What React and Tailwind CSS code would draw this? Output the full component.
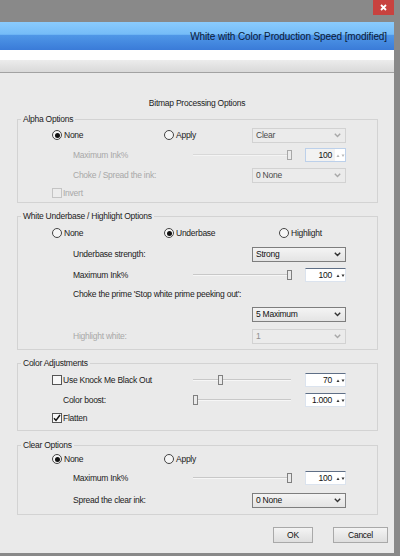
import React from 'react'

const txt = 'text-[8.5px] tracking-[-0.25px] leading-[11px]'

function Radio({ checked, label, disabled }) {
  return (
    <div className="flex items-center gap-[2px]">
      <span className={`w-[10px] h-[10px] rounded-full border flex items-center justify-center bg-[#f6f6f6] ${disabled ? 'border-[#b0b0b0]' : 'border-[#444]'}`}>
        {checked && <span className="w-[5px] h-[5px] rounded-full bg-[#111]" />}
      </span>
      <span className={disabled ? 'text-[#a8a8a8]' : 'text-[#1b1b1b]'}>{label}</span>
    </div>
  )
}

function Checkbox({ checked, label, disabled }) {
  return (
    <div className="flex items-center gap-[1px]">
      <span className={`w-[10px] h-[10px] border flex items-center justify-center ${disabled ? 'border-[#c4c4c4] bg-[#ececec]' : 'border-[#555] bg-[#f8f8f8]'}`}>
        {checked && (
          <svg width="8" height="8" viewBox="0 0 8 8">
            <path d="M1 4.2 L3 6.4 L7 1" fill="none" stroke="#111" strokeWidth="1.5" />
          </svg>
        )}
      </span>
      <span className={disabled ? 'text-[#a8a8a8]' : 'text-[#1b1b1b]'}>{label}</span>
    </div>
  )
}

function Select({ value, disabled, dim }) {
  return (
    <div
      className={`w-[94px] h-[15px] border flex items-center justify-between pl-[3px] pr-[4px] ${
        disabled
          ? 'border-[#d2d2d2] bg-[#ebebeb]'
          : 'border-[#7e7e7e] bg-[linear-gradient(to_bottom,#f4f4f4,#e4e4e4)]'
      }`}
    >
      <span className={dim ? 'text-[#8e8e8e]' : disabled ? 'text-[#4a4a4a]' : 'text-[#111]'}>{value}</span>
      <svg width="7" height="5" viewBox="0 0 7 5">
        <path d="M0.8 0.8 L3.5 3.6 L6.2 0.8" fill="none" stroke={disabled ? '#a8a8a8' : '#333'} strokeWidth="1.4" />
      </svg>
    </div>
  )
}

function Spin({ value, disabled }) {
  return (
    <div
      className={`w-[41px] h-[14px] border flex items-center ${
        disabled
          ? 'border-[#bcd0ea] bg-[#f2f2f2]'
          : 'border-[#dbe3ee] border-t-[#5f6f86] bg-white'
      }`}
    >
      <span className="flex-1 text-right pr-[3px] text-[#111]">{value}</span>
      <span className="w-[10px] h-full bg-white flex items-center justify-center">
        <svg width="9" height="5" viewBox="0 0 9 5">
          <path d="M0.5 4 L2 1.5 L3.5 4 Z" fill={disabled ? '#b8b8b8' : '#333'} />
          <path d="M5.5 1.5 L7 4 L8.5 1.5 Z" fill={disabled ? '#b8b8b8' : '#333'} />
        </svg>
      </span>
    </div>
  )
}

function Slider({ thumb, disabled }) {
  return (
    <div className="relative w-[98px] h-[12px]">
      <div className={`absolute left-0 right-0 top-[5px] h-[2px] border-t ${disabled ? 'border-[#d8d8d8] bg-[#f4f4f4]' : 'border-[#c8c8c8] bg-[#f6f6f6]'}`} />
      <div
        className={`absolute top-[1px] w-[5px] h-[10px] border ${disabled ? 'border-[#a8a8a8] bg-[#ececec]' : 'border-[#808080] bg-[#eaeaea]'}`}
        style={{ left: thumb }}
      />
    </div>
  )
}

function Group({ title, className, children }) {
  return (
    <div className={`ml-[17px] w-[361px] border border-[#d3d3d3] ${className}`}>
      <div className="-mt-[6px] ml-[3px] px-[2px] w-fit bg-[#eaeaea] h-[11px] text-[#1b1b1b]">{title}</div>
      {children}
    </div>
  )
}

function SliderRow({ label, thumb, value, disabled, h }) {
  return (
    <div className={`flex items-center pl-[55px] ${h}`}>
      <span className={`w-[120px] ${disabled ? 'text-[#a8a8a8]' : 'text-[#1b1b1b]'}`}>{label}</span>
      <Slider thumb={thumb} disabled={disabled} />
      <div className="ml-[14px]">
        <Spin value={value} disabled={disabled} />
      </div>
    </div>
  )
}

function SelectRow({ label, value, disabled, dim, h }) {
  return (
    <div className={`flex items-center pl-[55px] ${h}`}>
      <span className={`w-[179px] ${disabled || dim ? 'text-[#a8a8a8]' : 'text-[#1b1b1b]'}`}>{label}</span>
      <Select value={value} disabled={disabled || dim} dim={dim} />
    </div>
  )
}

export default function App() {
  return (
    <div className="w-[400px] h-[556px] bg-[#898989] flex flex-col font-['Liberation_Sans',Arial,sans-serif] overflow-hidden">
      {/* window chrome */}
      <div className="h-[22px] flex justify-end pr-[6px]">
        <div className="w-[21px] h-[15px] bg-[#c8423f] flex items-center justify-center">
          <svg width="7" height="7" viewBox="0 0 7 7">
            <path d="M1 1 L6 6 M6 1 L1 6" stroke="#fff" strokeWidth="1.8" />
          </svg>
        </div>
      </div>
      <div className="flex-1 flex">
        <div className="w-[394px] flex flex-col">
          <div className="h-[28px] bg-[linear-gradient(to_bottom,#8acbfd_0%,#75bcf8_44%,#4f97e7_47%,#3a7bd8_100%)] flex items-center justify-end pr-[7px]">
            <span className="text-[10px] text-[#0b1a35] tracking-[-0.1px]">White with Color Production Speed [modified]</span>
          </div>
          <div className="h-[10px] bg-white" />
          <div className="h-[13px] bg-[linear-gradient(to_bottom,#ececec,#d9d9d9)] border-b border-[#a2a2a2]" />

          {/* dialog body */}
          <div className={`flex-1 bg-[#eaeaea] flex flex-col ${txt}`}>
            <div className="pt-[24px] h-[36px] text-center text-[#1b1b1b] leading-[12px]">Bitmap Processing Options</div>

            <Group title="Alpha Options" className="mt-[10px] pb-[1px]">
              <div className="flex items-center h-[20px] pl-[34px]">
                <div className="w-[112px]"><Radio checked label="None" /></div>
                <div className="w-[88px]"><Radio label="Apply" /></div>
                <Select value="Clear" disabled />
              </div>
              <SliderRow label="Maximum Ink%" thumb={94} value="100" disabled h="h-[20px]" />
              <SelectRow label="Choke / Spread the ink:" value="0 None" disabled h="h-[20px]" />
              <div className="flex items-center h-[16px] pl-[34px]">
                <Checkbox label="Invert" disabled />
              </div>
            </Group>

            <Group title="White Underbase / Highlight Options" className="mt-[13px] pb-[3px]">
              <div className="flex items-center h-[22px] pl-[34px]">
                <div className="w-[112px]"><Radio label="None" /></div>
                <div className="w-[115px]"><Radio checked label="Underbase" /></div>
                <Radio label="Highlight" />
              </div>
              <SelectRow label="Underbase strength:" value="Strong" h="h-[20px]" />
              <SliderRow label="Maximum Ink%" thumb={94} value="100" h="h-[22px]" />
              <div className="flex items-center h-[16px] pl-[55px] text-[#1b1b1b]">
                Choke the prime 'Stop white prime peeking out':
              </div>
              <div className="flex items-center h-[25px] pl-[234px]">
                <Select value="5 Maximum" />
              </div>
              <SelectRow label="Highlight white:" value="1" dim h="h-[19px]" />
            </Group>

            <Group title="Color Adjustments" className="mt-[13px] pb-[3px]">
              <div className="flex items-center h-[22px] pl-[34px]">
                <div className="w-[141px]"><Checkbox label="Use Knock Me Black Out" /></div>
                <Slider thumb={25} />
                <div className="ml-[14px]"><Spin value="70" /></div>
              </div>
              <div className="flex items-center h-[18px] pl-[45px]">
                <span className="w-[130px] text-[#1b1b1b]">Color boost:</span>
                <Slider thumb={0} />
                <div className="ml-[14px]"><Spin value="1.000" /></div>
              </div>
              <div className="flex items-center h-[18px] pl-[34px]">
                <Checkbox checked label="Flatten" />
              </div>
            </Group>

            <Group title="Clear Options" className="mt-[14px] pb-[3px]">
              <div className="flex items-center h-[16px] pl-[34px]">
                <div className="w-[112px]"><Radio checked label="None" /></div>
                <Radio label="Apply" />
              </div>
              <SliderRow label="Maximum Ink%" thumb={94} value="100" h="h-[22px]" />
              <SelectRow label="Spread the clear ink:" value="0 None" h="h-[22px]" />
            </Group>

            <div className="mt-[12px] flex justify-end gap-[20px] pr-[6px]">
              <button className="w-[40px] h-[16px] border border-[#a9a9a9] bg-[linear-gradient(to_bottom,#f4f4f4,#dedede)] text-[#111]">OK</button>
              <button className="w-[55px] h-[16px] border border-[#a9a9a9] bg-[linear-gradient(to_bottom,#f4f4f4,#dedede)] text-[#111]">Cancel</button>
            </div>
          </div>
          <div className="h-[3px]" />
        </div>
      </div>
    </div>
  )
}
